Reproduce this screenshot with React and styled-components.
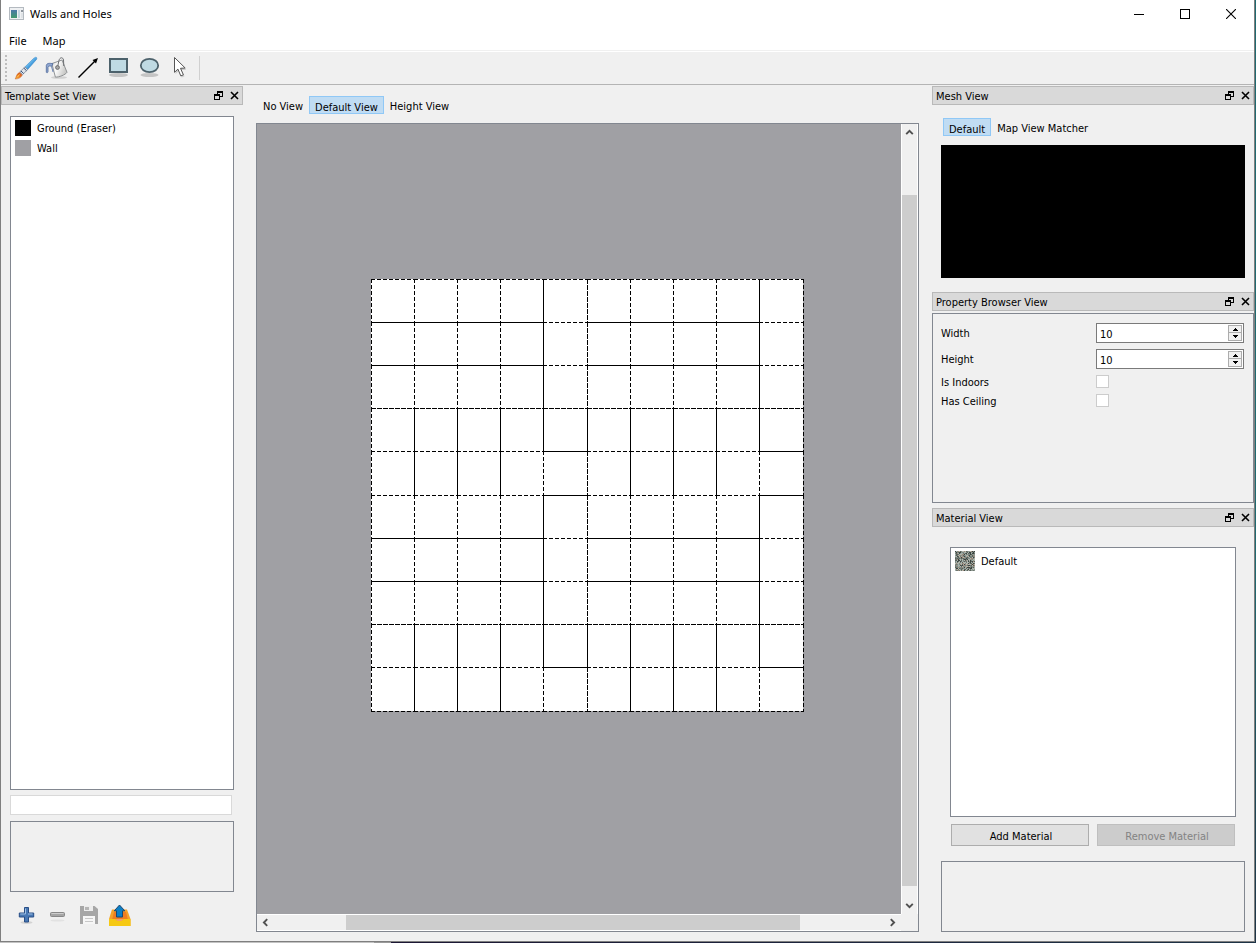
import React from "react";
import styled, { createGlobalStyle, css } from "styled-components";

const GlobalStyle = createGlobalStyle`
  *, *::before, *::after { box-sizing: border-box; }
  html, body, #root { height: 100%; }
  body {
    margin: 0;
    color: #000;
    font: 11px/14px "DejaVu Sans Condensed", "Noto Sans", sans-serif;
  }
  button, input { font: inherit; color: inherit; }
  ul { list-style: none; margin: 0; padding: 0; }
  svg { display: block; flex: none; }
`;

const line = "#828790";
const uiFont = '"Noto Sans", "Open Sans", sans-serif';

const Desktop = styled.div`
  min-height: 100vh;
  display: flex;
  flex-direction: column;
  padding-right: 1px;
  background: linear-gradient(#1f6a70, #1f6a70 60%, #1d3346);
`;

const Window = styled.div`
  flex: 1;
  display: flex;
  flex-direction: column;
  background: #f0f0f0;
  border: solid #7f7f7f;
  border-width: 0 1px 1px;
`;

const DesktopStrip = styled.div`
  height: 1px;
  background: linear-gradient(90deg, #c3c3c3 374px, #9a9a9a 374px, #9a9a9a 391px, #1b1633 391px, #1d3346);
`;

const TitleBar = styled.header`
  height: 28px;
  display: flex;
  align-items: center;
  padding-left: 8px;
  gap: 5px;
  background: #fff;
`;

const WindowTitle = styled.h1`
  flex: 1;
  margin: 0;
  font: 400 11px/16px ${uiFont};
`;

const PlainButton = styled.button`
  display: flex;
  align-items: center;
  justify-content: center;
  padding: 0;
  border: 0;
  background: none;
`;

const CaptionButtons = styled.div`
  display: flex;
`;

const CaptionButton = styled(PlainButton)`
  width: 46px;
  height: 28px;
`;

const MenuBar = styled.nav`
  height: 24px;
  display: flex;
  align-items: center;
  gap: 16px;
  padding: 2px 8px 0;
  background: #fff;
  border-bottom: 1px solid #fff;
  box-shadow: inset 0 -1px #f0f0f0;
`;

const MenuButton = styled(PlainButton)`
  font: 11px/16px ${uiFont};
`;

const ToolBar = styled.div`
  height: 33px;
  display: flex;
  align-items: center;
  padding-left: 4px;
  border-bottom: 1px solid #b4b4b4;
`;

const Grip = styled.div`
  width: 2px;
  height: 26px;
  margin-right: 4px;
  background: repeating-linear-gradient(#bdbdbd 0 2px, transparent 2px 4px);
`;

const ToolButton = styled(PlainButton)`
  width: 31px;
  height: 30px;
`;

const Separator = styled.div`
  width: 1px;
  height: 24px;
  margin-left: 2px;
  background: #d0d0d0;
`;

const Workspace = styled.main`
  flex: 1;
  display: flex;
  gap: 13px;
  padding-top: 1px;
`;

const SideColumn = styled.div`
  width: ${(p) => p.$width}px;
  flex: none;
  display: flex;
  flex-direction: column;
`;

const Dock = styled.section`
  display: flex;
  flex-direction: column;
  ${(p) => p.$grow && css`flex: 1;`}
`;

const DockTitle = styled.header`
  height: 19px;
  display: flex;
  align-items: center;
  padding-left: 3px;
  background: #d9d9d9;
  border: 1px solid #b9b9b9;
`;

const DockName = styled.h2`
  flex: 1;
  margin: 0;
  padding-top: 3px;
  font: inherit;
`;

const DockButton = styled(PlainButton)`
  width: 16px;
  height: 16px;
`;

const TemplateBody = styled.div`
  flex: 1;
  display: flex;
  flex-direction: column;
  padding: 11px 9px;
`;

const ItemList = styled.ul`
  flex: 1;
  padding: 1px 4px;
  background: #fff;
  border: 1px solid ${line};
`;

const Item = styled.li`
  height: ${(p) => (p.$tall ? 24 : 20)}px;
  display: flex;
  align-items: center;
  gap: 6px;
`;

const ItemText = styled.span`
  padding-top: 2px;
`;

const Swatch = styled.span`
  width: 16px;
  height: 16px;
  background: ${(p) => p.$color};
`;

const NameInput = styled.input`
  height: 20px;
  margin: 5px 2px 6px 0;
  padding: 0 3px;
  background: #fff;
  border: 1px solid #d9d9d9;
`;

const PreviewFrame = styled.div`
  height: 71px;
  border: 1px solid ${line};
`;

const IconRow = styled.div`
  display: flex;
  padding: 8px 1px 0;
`;

const Center = styled.div`
  flex: 1;
  min-width: 0;
  display: flex;
  flex-direction: column;
  padding: 10px 0 9px;
`;

const Tabs = styled.div`
  display: flex;
  align-items: center;
  height: 18px;
  margin: ${(p) => p.$margin};
`;

const Tab = styled(PlainButton)`
  height: 18px;
  padding: 4px 5px 0;
  border: 1px solid transparent;
  ${(p) => p.$active && css`
    padding: 5px 5px 0;
    background: #c0dcf3;
    border-color: #90c8f6;
  `}
`;

const MapFrame = styled.div`
  flex: 1;
  display: grid;
  grid-template: minmax(0, 1fr) 17px / minmax(0, 1fr) 17px;
  border: 1px solid ${line};
`;

const MapCanvas = styled.div`
  display: flex;
  align-items: center;
  justify-content: center;
  padding: 0 0 47px 17px;
  background: #a0a0a4;
  overflow: hidden;
`;

const ScrollBar = styled.div`
  display: flex;
  flex-direction: ${(p) => (p.$vertical ? "column" : "row")};
  border: solid #fff;
  border-width: ${(p) => (p.$vertical ? "0 1px" : "1px 0")};
`;

const ScrollArrow = styled(PlainButton)`
  width: ${(p) => (p.$vertical ? "15px" : "17px")};
  height: ${(p) => (p.$vertical ? "17px" : "15px")};
`;

const ScrollPart = styled.div`
  flex: ${(p) => p.$share} 1 0;
  background: ${(p) => (p.$thumb ? "#cdcdcd" : "transparent")};
`;

const MeshBody = styled.div`
  padding: 13px 9px 14px;
`;

const MeshCanvas = styled.div`
  height: 133px;
  background: #000;
`;

const PropertyForm = styled.form`
  height: 190px;
  margin: 2px 0 5px;
  padding: 6px 9px 0 8px;
  border: 1px solid ${line};
`;

const Field = styled.div`
  height: ${(p) => (p.$check ? 19 : 26)}px;
  display: flex;
  align-items: center;
`;

const FieldLabel = styled.label`
  width: 155px;
  padding-top: 2px;
`;

const SpinBox = styled.div`
  flex: 1;
  height: 20px;
  display: flex;
  padding: 1px;
  background: #fff;
  border: 1px solid #7a7a7a;
`;

const SpinInput = styled.input`
  flex: 1;
  min-width: 0;
  padding: 3px 2px 0;
  border: 0;
  outline: 0;
  background: none;
  appearance: textfield;
  &::-webkit-inner-spin-button { appearance: none; }
`;

const SpinArrows = styled.div`
  display: flex;
  flex-direction: column;
`;

const SpinArrow = styled(PlainButton)`
  width: 14px;
  height: 8px;
  background: #f0f0f0;
  border: 1px solid #acacac;
  & + & { border-top-width: 0; }
`;

const CheckBox = styled.input`
  appearance: none;
  width: 13px;
  height: 13px;
  margin: 0;
  background: #fff;
  border: 1px solid #cccccc;
`;

const MaterialBody = styled.div`
  flex: 1;
  display: flex;
  flex-direction: column;
  padding: 20px 9px 9px;
`;

const MaterialGroup = styled.div`
  flex: 1;
  display: flex;
  flex-direction: column;
  padding: 0 9px 15px;
`;

const MaterialButtons = styled.div`
  display: flex;
  gap: 8px;
  padding: 7px 1px 0;
`;

const PushButton = styled.button`
  flex: 1;
  height: 22px;
  padding: 3px 0 0 2px;
  background: #e1e1e1;
  border: 1px solid #adadad;
  &:disabled {
    color: #838383;
    background: #cccccc;
    border-color: #bfbfbf;
  }
`;

/* ---------- icons ---------- */

const AppIcon = () => (
  <svg width="16" height="14" viewBox="0 0 16 14">
    <defs>
      <linearGradient id="app" x1="0" y1="0" x2="0" y2="1">
        <stop offset="0" stopColor="#4a78a8" />
        <stop offset="1" stopColor="#3f9a6c" />
      </linearGradient>
    </defs>
    <rect x="0.5" y="0.5" width="14" height="12" fill="#eef0f2" stroke="#b4bac0" />
    <rect x="2" y="3" width="6" height="8" fill="url(#app)" />
    <rect x="9" y="3" width="2" height="8" fill="#c3d6e0" />
    <rect x="12" y="3" width="2" height="2" fill="#8c949c" />
    <rect x="12" y="6" width="2" height="5" fill="#dfe3e6" />
  </svg>
);

const MinimizeIcon = () => (
  <svg width="10" height="10" shapeRendering="crispEdges"><path d="M0 5.5h10" stroke="#000" /></svg>
);
const MaximizeIcon = () => (
  <svg width="10" height="10"><rect x="0.5" y="0.5" width="9" height="9" fill="none" stroke="#000" /></svg>
);
const CloseIcon = () => (
  <svg width="10" height="10"><path d="M0 0l10 10M10 0L0 10" stroke="#000" strokeWidth="1.1" /></svg>
);

const BrushIcon = () => (
  <svg width="25" height="26" viewBox="0 0 25 26">
    <defs>
      <linearGradient id="handle" x1="0" y1="0" x2="1" y2="1">
        <stop offset="0.3" stopColor="#8ad4f8" />
        <stop offset="0.65" stopColor="#2a86d2" />
      </linearGradient>
      <linearGradient id="tip" x1="1" y1="0" x2="0" y2="1">
        <stop offset="0" stopColor="#c04a1c" />
        <stop offset="0.5" stopColor="#f07a20" />
        <stop offset="1" stopColor="#f8c040" />
      </linearGradient>
    </defs>
    <path d="M21.800 2.200c1 0 1.300 1 .7 2.200L13.600 14.600 10.900 12 19.800 3.200z" fill="url(#handle)" stroke="#3b8ccc" strokeWidth=".6" />
    <path d="M10.900 12l2.700 2.600-5 5-2.800-2.700z" fill="#dfe3e8" stroke="#68788c" strokeWidth=".7" />
    <path d="M9.800 13.100l2.700 2.600M6.900 15.900l2.700 2.600" stroke="#34507c" strokeWidth="1" />
    <path d="M5.500 17.500l2.700 2.600c-.8 2.300-3.800 3.900-7 3.900 1-1.600 1.200-5.400 4.300-6.500z" fill="url(#tip)" stroke="#c05a28" strokeWidth=".5" />
    <path d="M5.500 19.500L3.500 22" stroke="#fbd060" />
  </svg>
);

const BucketIcon = () => (
  <svg width="25" height="26" viewBox="0 0 25 26">
    <defs>
      <linearGradient id="pail" x1="0" y1="0" x2="1" y2="0.4">
        <stop offset="0" stopColor="#dcdcda" />
        <stop offset="0.45" stopColor="#fafafa" />
        <stop offset="1" stopColor="#c9c9c7" />
      </linearGradient>
    </defs>
    <ellipse cx="14" cy="22.500" rx="8" ry="1.300" fill="#d0d0d0" />
    <path d="M6.800 8.600L17 5l5 12.300c-1.500 2.500-8 5-11.600 4.800z" fill="url(#pail)" stroke="#85888a" strokeWidth=".9" strokeLinejoin="round" />
    <path d="M12.500 12L14 5.500c.8-3.500 4-3.600 4.500-.5l.3 6" fill="none" stroke="#6c6f72" strokeWidth="1" />
    <circle cx="12.500" cy="12.500" r="1.900" fill="#a8a8a8" stroke="#666" strokeWidth=".9" />
    <path d="M8 8.800C5 8 1.500 8 1.300 10.500v6.800c.6.700 1.500.5 1.700-.5v-4.600c.5-1.400 2.200-1.400 3.500-.8z" fill="#8fa6cf" stroke="#4f6a9c" strokeWidth=".8" />
    <path d="M6.500 11.500l1.600 5.500" stroke="#6983b3" strokeWidth="1" />
  </svg>
);

const LineIcon = () => (
  <svg width="25" height="26" viewBox="0 0 25 26">
    <path d="M2.500 22.500L19 6" stroke="#000" strokeWidth="1.400" />
    <path d="M22 3l-2 5.500L16.500 5z" fill="#000" />
  </svg>
);

const RectIcon = () => (
  <svg width="25" height="26" viewBox="0 0 25 26">
    <ellipse cx="11.500" cy="20" rx="9.500" ry="2" fill="#b9b9b9" opacity=".8" />
    <rect x="3" y="4" width="17" height="13" fill="#bfdae3" stroke="#4c616b" strokeWidth="2" />
  </svg>
);

const EllipseIcon = () => (
  <svg width="25" height="26" viewBox="0 0 25 26">
    <ellipse cx="11.500" cy="20" rx="9" ry="2" fill="#b9b9b9" opacity=".8" />
    <ellipse cx="11.500" cy="10.500" rx="8.700" ry="6.700" fill="#bfdae3" stroke="#4c616b" strokeWidth="1.800" />
  </svg>
);

const CursorIcon = () => (
  <svg width="25" height="26" viewBox="0 0 25 26">
    <path d="M6.500 4v15l3.300-3 3 6.500 2.700-1.200-2.900-6.300h4.600z" fill="#bbb" opacity=".7" />
    <path d="M5.500 2.500v14.800l3.400-3.200 2.900 6.800 2.600-1.100-2.900-6.500 4.700-.3z" fill="#fff" stroke="#555" strokeWidth="1" />
  </svg>
);

const PlusIcon = () => (
  <svg width="25" height="25" viewBox="0 0 25 25">
    <ellipse cx="12.500" cy="19.500" rx="6" ry="1.400" fill="#d3d3d3" />
    <path d="M10.500 4.500h4v5.500h5.200v4h-5.200v5h-4v-5H5.300v-4h5.200z" fill="#4878b4" stroke="#284e86" strokeLinejoin="round" />
    <path d="M11.500 5.500v5.500H6.300M14 11h4.500" fill="none" stroke="#9dbfe2" />
  </svg>
);

const MinusIcon = () => (
  <svg width="25" height="25" viewBox="0 0 25 25">
    <ellipse cx="12.500" cy="17.500" rx="7" ry="1" fill="#e2e2e2" />
    <rect x="5.500" y="9.500" width="14" height="4" rx="1" fill="#a5a5a5" stroke="#888" />
    <path d="M6.500 10.500h12" stroke="#cdcdcd" />
  </svg>
);

const SaveIcon = () => (
  <svg width="25" height="25" viewBox="0 0 25 25">
    <path d="M4 3h14.500L22 6v15H4z" fill="#a6a6a6" />
    <path d="M8 3h9v5H8z" fill="#ececec" />
    <path d="M9 4h4v3H9z" fill="#b5b5b5" />
    <path d="M7 13h12v8H7z" fill="#f6f6f6" />
    <path d="M9 15.500h8M9 18.500h8" stroke="#c8c8c8" />
  </svg>
);

const ExportIcon = () => (
  <svg width="25" height="25" viewBox="0 0 25 25">
    <path d="M5 6.500h15L23.500 16v7H2v-7z" fill="#f5a22a" />
    <path d="M7 9h12l2 8H5z" fill="#ee7d22" />
    <path d="M2 16h6.500l2 2h4l2-2h7v7H2z" fill="#f6c913" />
    <path d="M8.500 16l2 2h4l2-2z" fill="#f3a06a" />
    <path d="M12.500 2l5.300 5.800H15.500V14h-6V7.800H7.300z" fill="#0d7fc4" stroke="#1b4770" strokeLinejoin="round" />
  </svg>
);

const FloatIcon = () => (
  <svg width="9" height="9" viewBox="0 0 9 9" shapeRendering="crispEdges">
    <path d="M3 1h6M3 0h6" stroke="#000" />
    <path d="M3.500 0v3M8.500 0v6M6 5.500h3" stroke="#000" fill="none" />
    <path d="M0 3.500h6M0 4.500h6M0.500 3v6M5.500 3v6M0 8.500h6" stroke="#000" fill="none" />
  </svg>
);

const DockCloseIcon = () => (
  <svg width="9" height="9" viewBox="0 0 9 9">
    <path d="M1 1l7 7M8 1L1 8" stroke="#000" strokeWidth="1.600" />
  </svg>
);

const Chevron = ({ turn }) => (
  <svg width="9" height="9" viewBox="0 0 9 9">
    <path d="M1.200 6.200L4.500 2.900l3.300 3.300" transform={`rotate(${turn} 4.500 4.500)`} fill="none" stroke="#505050" strokeWidth="1.900" />
  </svg>
);

const SpinTriangle = ({ down }) => (
  <svg width="5" height="3" shapeRendering="crispEdges">
    <path d={down ? "M0 0h5L2.500 3z" : "M0 3h5L2.500 0z"} fill="#000" />
  </svg>
);

const stoneColors = ["#59625c", "#8c978f", "#b4b7ad", "#6f7872", "#a08c7c", "#3c4440", "#a3b0aa", "#7e8882"];

const StoneTexture = () => {
  const cells = [];
  let seed = 17;
  for (let y = 0; y < 20; y += 1) {
    for (let x = 0; x < 20; x += 1) {
      seed = (seed * 16807) % 2147483647;
      cells.push(
        <rect key={`${x}-${y}`} x={x} y={y} width="1" height="1" fill={stoneColors[(seed >> 12) % 8]} />
      );
    }
  }
  return <svg width="20" height="20" shapeRendering="crispEdges">{cells}</svg>;
};

/* ---------- map grid ---------- */

const stops = [0, 43, 86, 129, 172, 216, 259, 302, 345, 388, 432];

const rowEdge = (row, col) => {
  if (row === 3 || row === 8) return "5 1";
  const band = row % 5;
  const outer = col % 5 === 4;
  if (row === 0 || row === 10) return "4 2";
  if (band === 1 || band === 2) return outer ? "4 2" : null;
  return outer ? null : "4 2";
};

const colEdge = (col, row) => {
  const band = row % 5;
  if (col === 0 || col === 10) return "4 2";
  if (col % 5 === 4) return band === 4 ? "4 2" : null;
  if (col === 5) return band === 3 ? null : "5 1";
  return band >= 3 ? null : "4 2";
};

const MapGrid = () => {
  const edges = [];
  stops.forEach((at, i) => {
    for (let j = 0; j < 10; j += 1) {
      const from = stops[j];
      const to = stops[j + 1];
      edges.push(
        <path key={`h${i}-${j}`} d={`M${from} ${at + 0.5}H${to + 1}`} strokeDasharray={rowEdge(i, j) || undefined} />,
        <path key={`v${i}-${j}`} d={`M${at + 0.5} ${from}V${to + 1}`} strokeDasharray={colEdge(i, j) || undefined} />
      );
    }
  });
  return (
    <svg width="433" height="433" shapeRendering="crispEdges" role="img" aria-label="Map grid">
      <rect width="432" height="432" fill="#fff" />
      <g stroke="#000" strokeWidth="1">{edges}</g>
    </svg>
  );
};

/* ---------- composed parts ---------- */

const DockHeader = ({ name }) => (
  <DockTitle>
    <DockName>{name}</DockName>
    <DockButton aria-label={`Float ${name}`}><FloatIcon /></DockButton>
    <DockButton aria-label={`Close ${name}`}><DockCloseIcon /></DockButton>
  </DockTitle>
);

const Spin = ({ id, label }) => (
  <Field>
    <FieldLabel htmlFor={id}>{label}</FieldLabel>
    <SpinBox>
      <SpinInput id={id} type="number" defaultValue="10" />
      <SpinArrows>
        <SpinArrow type="button" aria-label={`Increase ${label}`}><SpinTriangle /></SpinArrow>
        <SpinArrow type="button" aria-label={`Decrease ${label}`}><SpinTriangle down /></SpinArrow>
      </SpinArrows>
    </SpinBox>
  </Field>
);

const Check = ({ id, label }) => (
  <Field $check>
    <FieldLabel htmlFor={id}>{label}</FieldLabel>
    <CheckBox id={id} type="checkbox" />
  </Field>
);

const tools = [
  ["Brush", BrushIcon],
  ["Fill", BucketIcon],
  ["Line", LineIcon],
  ["Rectangle", RectIcon],
  ["Ellipse", EllipseIcon],
  ["Select", CursorIcon],
];

const templateActions = [
  ["Add template", PlusIcon],
  ["Remove template", MinusIcon],
  ["Save templates", SaveIcon],
  ["Load templates", ExportIcon],
];

export default function App() {
  return (
    <>
      <GlobalStyle />
      <Desktop>
        <Window>
          <TitleBar>
            <AppIcon />
            <WindowTitle>Walls and Holes</WindowTitle>
            <CaptionButtons>
              <CaptionButton aria-label="Minimize"><MinimizeIcon /></CaptionButton>
              <CaptionButton aria-label="Maximize"><MaximizeIcon /></CaptionButton>
              <CaptionButton aria-label="Close"><CloseIcon /></CaptionButton>
            </CaptionButtons>
          </TitleBar>
          <MenuBar>
            <MenuButton>File</MenuButton>
            <MenuButton>Map</MenuButton>
          </MenuBar>
          <ToolBar>
            <Grip />
            {tools.map(([name, Icon]) => (
              <ToolButton key={name} aria-label={name}><Icon /></ToolButton>
            ))}
            <Separator />
          </ToolBar>
          <Workspace>
            <SideColumn $width={242}>
              <Dock $grow>
                <DockHeader name="Template Set View" />
                <TemplateBody>
                  <ItemList>
                    <Item><Swatch $color="#000" /><ItemText>Ground (Eraser)</ItemText></Item>
                    <Item><Swatch $color="#a0a0a4" /><ItemText>Wall</ItemText></Item>
                  </ItemList>
                  <NameInput aria-label="Template name" />
                  <PreviewFrame />
                  <IconRow>
                    {templateActions.map(([name, Icon]) => (
                      <ToolButton key={name} aria-label={name}><Icon /></ToolButton>
                    ))}
                  </IconRow>
                </TemplateBody>
              </Dock>
            </SideColumn>

            <Center>
              <Tabs $margin="0 1px 9px">
                <Tab>No View</Tab>
                <Tab $active>Default View</Tab>
                <Tab>Height View</Tab>
              </Tabs>
              <MapFrame>
                <MapCanvas><MapGrid /></MapCanvas>
                <ScrollBar $vertical>
                  <ScrollArrow $vertical aria-label="Scroll up"><Chevron turn={0} /></ScrollArrow>
                  <ScrollPart $share={54} />
                  <ScrollPart $share={691} $thumb />
                  <ScrollPart $share={11} />
                  <ScrollArrow $vertical aria-label="Scroll down"><Chevron turn={180} /></ScrollArrow>
                </ScrollBar>
                <ScrollBar>
                  <ScrollArrow aria-label="Scroll left"><Chevron turn={270} /></ScrollArrow>
                  <ScrollPart $share={72} />
                  <ScrollPart $share={454} $thumb />
                  <ScrollPart $share={84} />
                  <ScrollArrow aria-label="Scroll right"><Chevron turn={90} /></ScrollArrow>
                </ScrollBar>
              </MapFrame>
            </Center>

            <SideColumn $width={322}>
              <Dock>
                <DockHeader name="Mesh View" />
                <MeshBody>
                  <Tabs $margin="0 2px 9px">
                    <Tab $active>Default</Tab>
                    <Tab>Map View Matcher</Tab>
                  </Tabs>
                  <MeshCanvas />
                </MeshBody>
              </Dock>
              <Dock>
                <DockHeader name="Property Browser View" />
                <PropertyForm>
                  <Spin id="map-width" label="Width" />
                  <Spin id="map-height" label="Height" />
                  <Check id="is-indoors" label="Is Indoors" />
                  <Check id="has-ceiling" label="Has Ceiling" />
                </PropertyForm>
              </Dock>
              <Dock $grow>
                <DockHeader name="Material View" />
                <MaterialBody>
                  <MaterialGroup>
                    <ItemList>
                      <Item $tall><StoneTexture /><ItemText>Default</ItemText></Item>
                    </ItemList>
                    <MaterialButtons>
                      <PushButton>Add Material</PushButton>
                      <PushButton disabled>Remove Material</PushButton>
                    </MaterialButtons>
                  </MaterialGroup>
                  <PreviewFrame />
                </MaterialBody>
              </Dock>
            </SideColumn>
          </Workspace>
        </Window>
        <DesktopStrip />
      </Desktop>
    </>
  );
}
